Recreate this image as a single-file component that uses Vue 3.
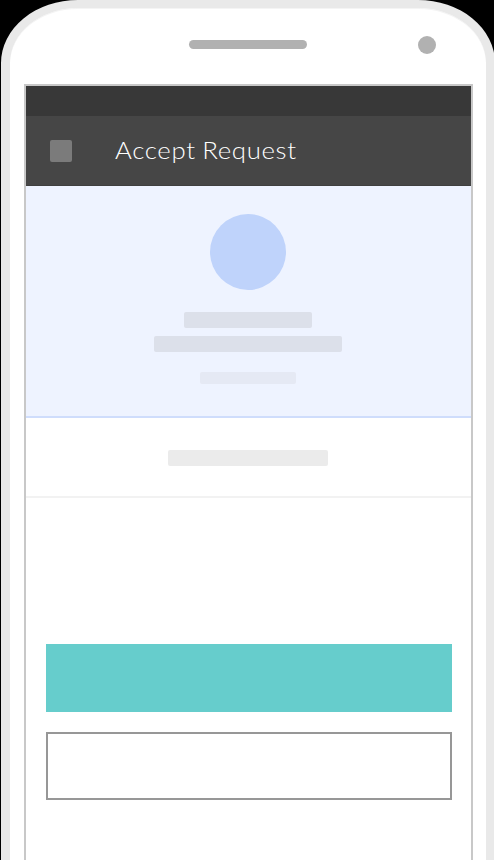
<script setup>
const title = 'Accept Request'
</script>

<template>
  <main class="stage">
    <div class="phone">
      <div class="bezel">
        <span class="speaker"></span>
        <span class="camera"></span>
      </div>
      <section class="screen">
        <div class="status"></div>
        <header class="appbar">
          <span class="nav-icon"></span>
          <h1 class="title">{{ title }}</h1>
        </header>
        <div class="profile">
          <div class="avatar"></div>
          <div class="bar name"></div>
          <div class="bar detail"></div>
          <div class="bar note"></div>
        </div>
        <div class="summary"><div class="bar amount"></div></div>
        <div class="actions">
          <button class="primary" aria-label="Accept"></button>
          <button class="secondary" aria-label="Decline"></button>
        </div>
      </section>
    </div>
  </main>
</template>

<style>
body {
  margin: 0;
  background: #000;
}
</style>

<style scoped>
* {
  box-sizing: border-box;
}
.stage {
  height: 860px;
  overflow: hidden;
  background: #000;
  padding-left: 1px;
}
.phone {
  width: 493.5px;
  height: 960px;
  border: solid #e9e9e9;
  border-width: 8px 9px 8px 9px;
  border-radius: 77px / 63px;
  background: #fff;
  padding: 0 11.5px 0 14px;
  box-shadow: inset 0 1px 0 #f4f4f4;
}
.bezel {
  height: 76px;
  display: flex;
  align-items: center;
  justify-content: flex-end;
  gap: 110.5px;
  padding: 0 38.5px 3px 0;
}
.speaker {
  width: 118px;
  height: 9.5px;
  border-radius: 5px;
  background: #b1b1b1;
}
.camera {
  width: 18px;
  height: 18px;
  border-radius: 50%;
  background: #b1b1b1;
}
.screen {
  width: 449px;
  height: 850px;
  border: 2px solid #c8c8c8;
  background: #fff;
}
.status {
  height: 30px;
  background: #383838;
}
.appbar {
  height: 70px;
  display: flex;
  align-items: center;
  padding-left: 24px;
  background: #464646;
  border-bottom: 1px solid #3f3f3f;
}
.nav-icon {
  width: 22px;
  height: 22px;
  margin-right: 43px;
  border-radius: 2px;
  background: #7b7b7b;
}
.title {
  margin: 0;
  padding-bottom: 2px;
  color: #fff;
  font: 300 23px/30px Lato, sans-serif;
  letter-spacing: 0.6px;
  word-spacing: -1px;
  white-space: nowrap;
  transform: scaleX(1.12);
  transform-origin: left center;
}
.profile {
  height: 232px;
  padding: 28px 1px 0 0;
  display: flex;
  flex-direction: column;
  align-items: center;
  background: #eef3ff;
  border-bottom: 2px solid #cfddfc;
}
.avatar {
  width: 76px;
  height: 76px;
  margin-bottom: 22px;
  border-radius: 50%;
  background: #bfd3fb;
}
.bar {
  height: 16px;
  border-radius: 2px;
  background: #dce0ea;
}
.name {
  width: 128px;
  margin-bottom: 8px;
}
.detail {
  width: 188px;
  margin-bottom: 20px;
}
.note {
  width: 96px;
  height: 12px;
  background: #e5e9f4;
}
.summary {
  height: 80px;
  padding: 2px 1px 0 0;
  display: flex;
  justify-content: center;
  align-items: center;
  border-bottom: 2px solid #f2f2f2;
}
.amount {
  width: 160px;
  background: #ebebeb;
}
.actions {
  padding: 146px 19px 0 20px;
  display: flex;
  flex-direction: column;
  gap: 20px;
}
.primary,
.secondary {
  height: 68px;
  padding: 0;
  border: 0;
  border-radius: 0;
  background: #66cdcc;
}
.secondary {
  border: 2px solid #979797;
  background: #fff;
}
</style>
